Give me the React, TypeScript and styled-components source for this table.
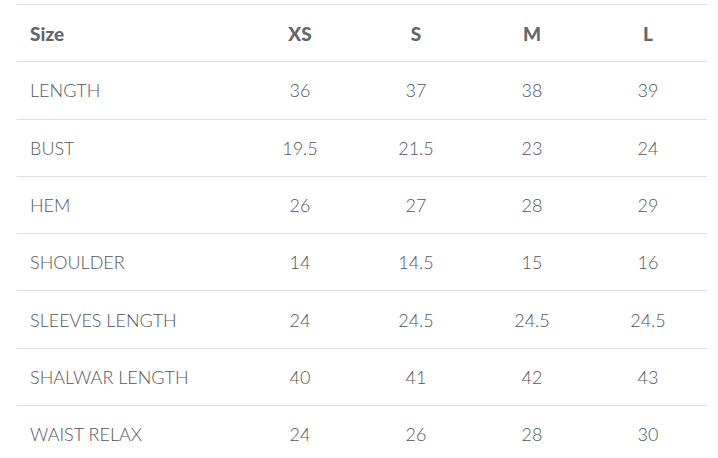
import React from 'react';
import styled, { createGlobalStyle } from 'styled-components';

const GlobalStyle = createGlobalStyle`
  body {
    margin: 0;
    background: #ffffff;
    font-family: Lato, 'Liberation Sans', sans-serif;
  }
`;

const sizes = ['XS', 'S', 'M', 'L'];

const rows: [string, string[]][] = [
  ['LENGTH', ['36', '37', '38', '39']],
  ['BUST', ['19.5', '21.5', '23', '24']],
  ['HEM', ['26', '27', '28', '29']],
  ['SHOULDER', ['14', '14.5', '15', '16']],
  ['SLEEVES LENGTH', ['24', '24.5', '24.5', '24.5']],
  ['SHALWAR LENGTH', ['40', '41', '42', '43']],
  ['WAIST RELAX', ['24', '26', '28', '30']],
];

export default function App() {
  return (
    <>
      <GlobalStyle />
      <Wrapper>
        <Chart>
          <Row>
            <Cell head>Size</Cell>
            {sizes.map((s) => (
              <Cell head center key={s}>{s}</Cell>
            ))}
          </Row>
          {rows.map(([label, values]) => (
            <Row key={label}>
              <Cell>{label}</Cell>
              {values.map((v, i) => (
                <Cell center key={i}>{v}</Cell>
              ))}
            </Row>
          ))}
        </Chart>
      </Wrapper>
    </>
  );
}

const Wrapper = styled.div`
  padding: 4px 11px 0 17px;
`;

const Chart = styled.div`
  display: flex;
  flex-direction: column;
  width: 690px;
`;

const Row = styled.div`
  display: grid;
  grid-template-columns: 225px repeat(4, 116px);
  align-items: center;
  height: 57.3px;
  box-sizing: border-box;
  border-top: 1px solid #e0e0e0;
`;

const Cell = styled.div<{ head?: boolean; center?: boolean }>`
  padding-left: ${(props) => (props.center ? '0' : '13px')};
  text-align: ${(props) => (props.center ? 'center' : 'left')};
  font-size: ${(props) => (props.head ? '19px' : '18px')};
  font-weight: ${(props) => (props.head ? 900 : 300)};
  color: ${(props) => (props.head ? '#63676b' : '#53575b')};
  line-height: 1;
`;
